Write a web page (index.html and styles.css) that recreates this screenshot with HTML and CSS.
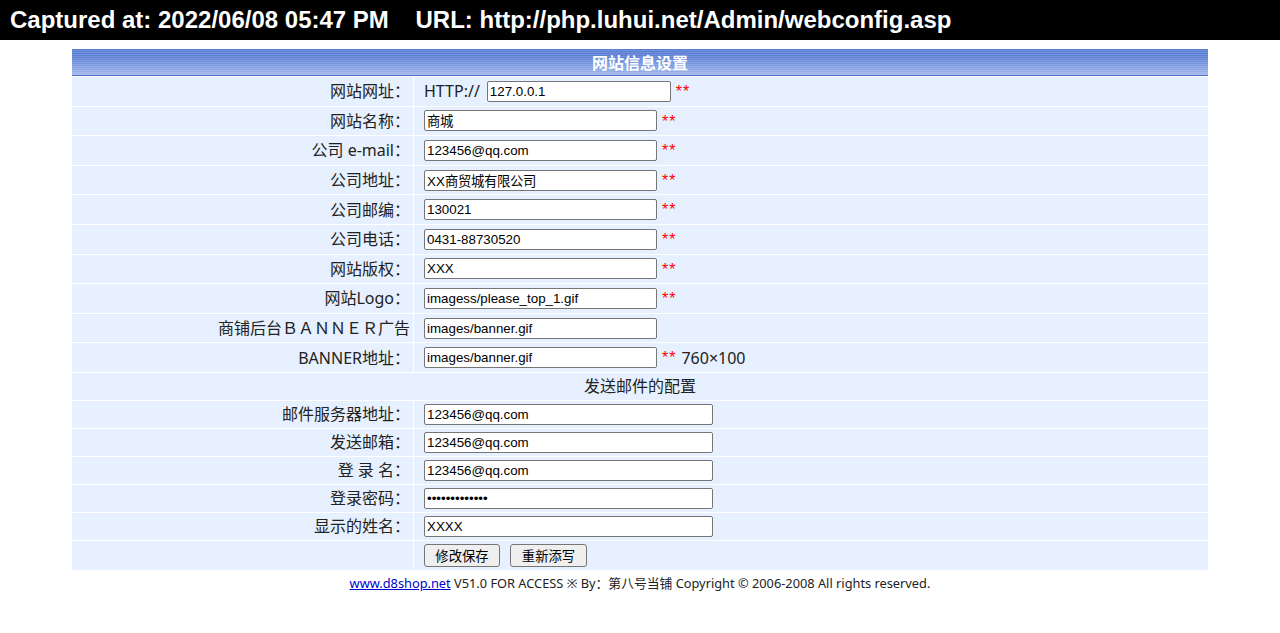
FILE: index.html
```html
<!DOCTYPE html>
<html lang="zh-CN">
<head>
<meta charset="utf-8">
<title>网站信息设置</title>
<link rel="stylesheet" href="styles.css">
</head>
<body>
<div class="capture">Captured at: 2022/06/08 05:47 PM    URL: http://php.luhui.net/Admin/webconfig.asp</div>
<main class="page">
  <form class="config">
    <h1 class="config-title">网站信息设置</h1>

    <div class="row">
      <label class="label">网站网址：</label>
      <div class="field"><span class="prefix">HTTP://</span><input class="input input-url" type="text" value="127.0.0.1"><span class="req">**</span></div>
    </div>
    <div class="row">
      <label class="label">网站名称：</label>
      <div class="field"><input class="input" type="text" value="商城"><span class="req">**</span></div>
    </div>
    <div class="row">
      <label class="label">公司 e-mail：</label>
      <div class="field"><input class="input" type="text" value="123456@qq.com"><span class="req">**</span></div>
    </div>
    <div class="row">
      <label class="label">公司地址：</label>
      <div class="field"><input class="input" type="text" value="XX商贸城有限公司"><span class="req">**</span></div>
    </div>
    <div class="row">
      <label class="label">公司邮编：</label>
      <div class="field"><input class="input" type="text" value="130021"><span class="req">**</span></div>
    </div>
    <div class="row">
      <label class="label">公司电话：</label>
      <div class="field"><input class="input" type="text" value="0431-88730520"><span class="req">**</span></div>
    </div>
    <div class="row">
      <label class="label">网站版权：</label>
      <div class="field"><input class="input" type="text" value="XXX"><span class="req">**</span></div>
    </div>
    <div class="row">
      <label class="label">网站Logo：</label>
      <div class="field"><input class="input" type="text" value="imagess/please_top_1.gif"><span class="req">**</span></div>
    </div>
    <div class="row">
      <label class="label">商铺后台ＢＡＮＮＥＲ广告</label>
      <div class="field"><input class="input" type="text" value="images/banner.gif"></div>
    </div>
    <div class="row">
      <label class="label">BANNER地址：</label>
      <div class="field"><input class="input" type="text" value="images/banner.gif"><span class="req">**</span><span class="hint">760×100</span></div>
    </div>

    <div class="row row-section">
      <div class="section-title">发送邮件的配置</div>
    </div>

    <div class="row row-mail">
      <label class="label">邮件服务器地址：</label>
      <div class="field"><input class="input input-wide" type="text" value="123456@qq.com"></div>
    </div>
    <div class="row row-mail">
      <label class="label">发送邮箱：</label>
      <div class="field"><input class="input input-wide" type="text" value="123456@qq.com"></div>
    </div>
    <div class="row row-mail">
      <label class="label">登 录 名：</label>
      <div class="field"><input class="input input-wide" type="text" value="123456@qq.com"></div>
    </div>
    <div class="row row-mail">
      <label class="label">登录密码：</label>
      <div class="field"><input class="input input-wide" type="password" value="1234567890123"></div>
    </div>
    <div class="row row-mail">
      <label class="label">显示的姓名：</label>
      <div class="field"><input class="input input-wide" type="text" value="XXXX"></div>
    </div>

    <div class="row row-actions">
      <div class="label"></div>
      <div class="field buttons">
        <button class="btn" type="submit">修改保存</button>
        <button class="btn" type="reset">重新添写</button>
      </div>
    </div>
  </form>

  <p class="footer"><a href="#">www.d8shop.net</a> V51.0 FOR ACCESS ※ By：第八号当铺 Copyright © 2006-2008 All rights reserved.</p>
</main>
</body>
</html>
```

FILE: styles.css
```css
html, body {
  margin: 0;
  padding: 0;
  background: #fff;
}

body {
  font-family: "Noto Sans", "Noto Sans CJK SC", sans-serif;
  color: #222;
}

/* capture banner across the top */
.capture {
  height: 40px;
  display: flex;
  align-items: center;
  padding-left: 10px;
  background: #000;
  color: #fff;
  font-family: "Liberation Sans", Arial, sans-serif;
  font-weight: bold;
  font-size: 24px;
  white-space: pre;
}

.page {
  padding-top: 9px;
}

/* settings form */
.config {
  width: 1136px;
  margin: 0 auto;
  display: flex;
  flex-direction: column;
  gap: 1px;
  background: #fff;
}

.config-title {
  margin: 0;
  height: 26px;
  display: flex;
  align-items: center;
  justify-content: center;
  color: #fff;
  font-family: "Noto Sans CJK SC", sans-serif;
  font-size: 16px;
  font-weight: bold;
  line-height: 1;
  border-bottom: 1px solid #4d6fc6;
  background:
    repeating-linear-gradient(to bottom, rgba(255, 255, 255, 0) 0 1px, rgba(255, 255, 255, 0.14) 1px 2px),
    linear-gradient(to bottom, #5a7ed4 0%, #5d80d5 30%, #7b99e0 60%, #a2b8ec 100%);
}

.row {
  height: 28.6px;
  display: grid;
  grid-template-columns: 341px 1fr;
  column-gap: 1px;
}

.row-section {
  height: 27px;
  grid-template-columns: 1fr;
}

.row-mail {
  height: 27px;
}

.row-actions {
  height: 29px;
}

.label,
.field,
.section-title {
  background: #e6f0fe;
  display: flex;
  align-items: center;
  font-size: 16px;
  line-height: 1;
  white-space: pre;
}

.label {
  justify-content: flex-end;
  padding-right: 3px;
}

.field {
  padding-left: 10px;
}

.section-title {
  justify-content: center;
}

.prefix {
  margin-right: 7px;
}

.input {
  box-sizing: border-box;
  width: 233px;
  height: 21px;
  margin: 0;
  padding: 0 2px;
  border: 1px solid #767676;
  border-radius: 2px;
  background: #fff;
  color: #000;
  font-family: "Liberation Sans", Arial, sans-serif;
  font-size: 13.33px;
}

.input-url {
  width: 184px;
}

.input-wide {
  width: 289px;
}

.req {
  margin-left: 5px;
  color: #f00;
  font-family: "Liberation Sans", Arial, sans-serif;
  font-size: 16px;
  letter-spacing: 1px;
  align-self: flex-start;
  padding-top: 7px;
}

.hint {
  margin-left: 5px;
}

.buttons {
  gap: 10px;
}

.btn {
  box-sizing: border-box;
  width: 76px;
  height: 23px;
  margin: 0;
  padding: 0;
  border: 1px solid #767676;
  border-radius: 3px;
  background: #efefef;
  color: #000;
  font-family: "Noto Sans CJK SC", sans-serif;
  font-size: 13.33px;
  line-height: 1;
}

.btn + .btn {
  width: 77px;
}

.footer {
  margin: 4px 0 0;
  text-align: center;
  font-size: 12.8px;
  line-height: 18px;
  color: #222;
}

.footer a {
  color: #0000cc;
  text-decoration: underline;
}
```
